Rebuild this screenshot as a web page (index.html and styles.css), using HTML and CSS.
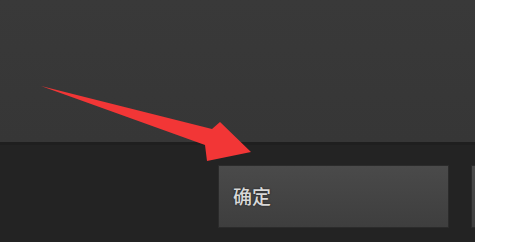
FILE: index.html
```html
<!DOCTYPE html>
<html lang="zh">
<head>
<meta charset="utf-8">
<link rel="stylesheet" href="styles.css">
</head>
<body>
<div class="window">
  <div class="panel"></div>
  <div class="bar">
    <button class="btn">确定</button>
    <button class="btn" aria-label="取消"></button>
  </div>
  <svg class="arrow" width="260" height="170" viewBox="0 0 260 170">
    <polygon points="41,86 212,129 220,122 251,152 207,161 205,145" fill="#f23636"/>
  </svg>
</div>
</body>
</html>
```
FILE: styles.css
```css
html, body {
  margin: 0;
  padding: 0;
  background: #ffffff;
}
.window {
  position: relative;
  width: 475px;
  height: 242px;
  display: flex;
  flex-direction: column;
  overflow: hidden;
  background: #232323;
}
.panel {
  height: 142px;
  background: linear-gradient(#393939, #363636);
  border-bottom: 3px solid #1f1f1f;
  flex: none;
}
.bar {
  flex: 1;
  display: flex;
  gap: 22px;
  padding: 20px 0 0 218px;
  background: #232323;
}
.btn {
  flex: none;
  width: 231px;
  height: 63px;
  margin: 0;
  padding: 0 0 2px 14px;
  text-align: left;
  border: 1px solid #2b2b2b;
  background: linear-gradient(#4a4a4a, #3e3e3e);
  color: #d8d8d8;
  font-family: "Noto Sans CJK SC", sans-serif;
  font-size: 19px;
  font-weight: 500;
  text-shadow: 0 0 2px #1a1a1a;
}
.arrow {
  position: absolute;
  left: 0;
  top: 0;
}
```
